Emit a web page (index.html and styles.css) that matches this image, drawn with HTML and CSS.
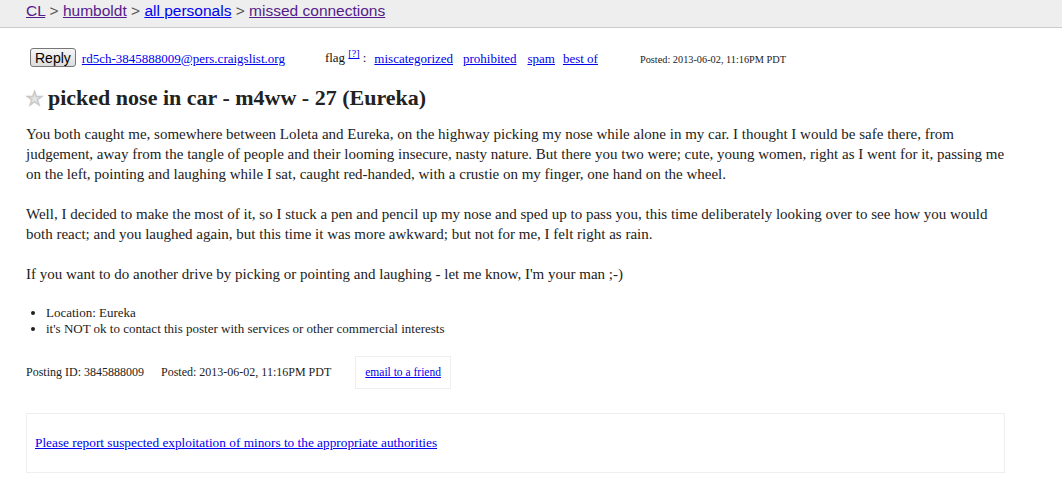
FILE: index.html
```html
<!DOCTYPE html>
<html>
<head>
<meta charset="utf-8">
<link rel="stylesheet" href="styles.css">
</head>
<body>
<header class="bchead">
  <a class="v" href="#">CL</a> <span class="gt">&gt;</span> <a class="v" href="#">humboldt</a> <span class="gt">&gt;</span> <a class="b" href="#">all personals</a> <span class="gt">&gt;</span> <a class="v" href="#">missed connections</a>
</header>
<main class="page">
  <div class="toprow">
    <button class="reply">Reply</button>
    <a class="b email" href="#">rd5ch-3845888009@pers.craigslist.org</a>
    <span class="flag">flag <sup><a class="q" href="#">[?]</a></sup> :</span>
    <a class="b fl" href="#">miscategorized</a>
    <a class="b fl wide" href="#">prohibited</a>
    <a class="b fl narrow" href="#">spam</a>
    <a class="b fl" href="#">best of</a>
    <span class="posted">Posted: 2013-06-02, 11:16PM PDT</span>
  </div>
  <h2 class="title"><span class="star">&#9733;</span>picked nose in car - m4ww - 27 (Eureka)</h2>
  <div class="body">You both caught me, somewhere between Loleta and Eureka, on the highway picking my nose while alone in my car. I thought I would be safe there, from judgement, away from the tangle of people and their looming insecure, nasty nature. But there you two were; cute, young women, right as I went for it, passing me on the left, pointing and laughing while I sat, caught red-handed, with a crustie on my finger, one hand on the wheel.<br><br>Well, I decided to make the most of it, so I stuck a pen and pencil up my nose and sped up to pass you, this time deliberately looking over to see how you would both react; and you laughed again, but this time it was more awkward; but not for me, I felt right as rain.<br><br>If you want to do another drive by picking or pointing and laughing - let me know, I'm your man ;-)</div>
  <ul class="notices">
    <li>Location: Eureka</li>
    <li>it's NOT ok to contact this poster with services or other commercial interests</li>
  </ul>
  <div class="footrow">
    <span>Posting ID: 3845888009</span>
    <span>Posted: 2013-06-02, 11:16PM PDT</span>
    <span class="friend"><a class="b" href="#">email to a friend</a></span>
  </div>
  <div class="report"><a class="b" href="#">Please report suspected exploitation of minors to the appropriate authorities</a></div>
</main>
</body>
</html>
```
FILE: styles.css
```css
body {
  margin: 0;
  background: #fff;
  color: #222;
  font-family: "Liberation Serif", "Times New Roman", serif;
}
a.b { color: #00e; }
a.v { color: #551a8b; }
.bchead {
  height: 28px;
  box-sizing: border-box;
  background: #eee;
  border-bottom: 1px solid #ccc;
  padding: 1px 0 0 26px;
  font-family: "Liberation Sans", Arial, sans-serif;
  font-size: 15.5px;
  line-height: 20px;
}
.bchead .gt { color: #555; }
.page {
  padding: 0 26px;
  width: 979px;
}
.toprow {
  display: flex;
  align-items: baseline;
  margin-top: 20px;
  font-size: 13px;
  height: 21px;
}
.reply {
  font-family: "Liberation Sans", Arial, sans-serif;
  font-size: 14px;
  height: 19px;
  padding: 0 4px;
  margin: 0 6px 0 4px;
  border: 1px solid #777;
  border-radius: 3px;
  background: linear-gradient(#f6f6f6, #dcdcdc);
  color: #000;
}
.email { margin-right: 40px; }
.flag { color: #111; margin-right: 8px; }
.flag sup { font-size: 10px; }
.flag .q { color: #00e; }
.fl { margin-right: 10px; }
.fl.wide { margin-right: 11px; }
.fl.narrow { margin-right: 8px; }
.posted {
  font-size: 10.3px;
  margin-left: 32px;
}
.title {
  margin: 16px 0 0 0;
  font-size: 22px;
  font-weight: bold;
  line-height: 26px;
  color: #222;
}
.star {
  color: #e4e4e4;
  font-size: 19px;
  margin-right: 5px;
  -webkit-text-stroke: 0.6px #c8c8c8;
}
.body {
  margin-top: 12px;
  font-size: 15px;
  line-height: 20px;
}
.notices {
  margin: 21px 0 0 0;
  padding-left: 20px;
  font-size: 13px;
  line-height: 16px;
}
.footrow {
  display: flex;
  align-items: center;
  margin-top: 19px;
  font-size: 12px;
}
.footrow > span:first-child { margin-right: 17px; }
.footrow > span:nth-child(2) { margin-right: 24px; }
.friend {
  border: 1px solid #eee;
  padding: 8px 9px 8px 9px;
}
.friend a { font-size: 11.5px; }
.report {
  margin-top: 24px;
  box-sizing: border-box;
  border: 1px solid #eee;
  padding: 21px 8px;
  font-size: 13.3px;
}
```
